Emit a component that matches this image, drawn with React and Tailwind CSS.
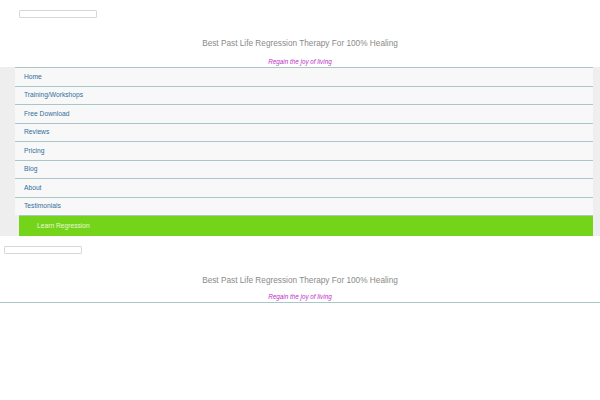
const menu = ['Home', 'Training/Workshops', 'Free Download', 'Reviews', 'Pricing', 'Blog', 'About', 'Testimonials'];

function Header({ boxLeft, titleTop, tagTop }) {
  return (
    <div className="bg-white">
      <div className={`pt-[10px] ${boxLeft}`}>
        <div className="w-[78px] h-[8px] border border-[#d8d8d8] bg-white rounded-[1px]" />
      </div>
      <div className={`${titleTop} text-center text-[8.25px] leading-[12px] text-[#8a8a8a]`}>
        Best Past Life Regression Therapy For 100% Healing
      </div>
      <div className={`${tagTop} text-center text-[6.3px] leading-[10px] italic text-[#c02ec8]`}>
        Regain the joy of living
      </div>
    </div>
  );
}

export default function App() {
  return (
    <div className="w-[600px] h-[400px] bg-white overflow-hidden" style={{ fontFamily: '"Liberation Sans", Arial, sans-serif' }}>
      <Header boxLeft="pl-[19px]" titleTop="pt-[20px]" tagTop="pt-[7px]" />
      <div className="bg-[#eeeeee] pl-[15px] pr-[7px]">
        {menu.map((m) => (
          <div key={m} className="h-[18.5px] flex items-center pl-[9px] bg-[#f8f8f8] border-t border-[#a9c6c8] text-[6.7px] text-[#2f6e9c]">
            {m}
          </div>
        ))}
        <div className="ml-[4px] h-[21px] flex items-center pl-[18px] bg-[#74d41a] text-[6.7px] text-[#e8f8d8] border-t border-[#a9c6c8]">
          Learn Regression
        </div>
      </div>
      <Header boxLeft="pl-[4px]" titleTop="pt-[21px]" tagTop="pt-[5px]" />
      <div className="border-t border-[#a9c6c8]" />
    </div>
  );
}
